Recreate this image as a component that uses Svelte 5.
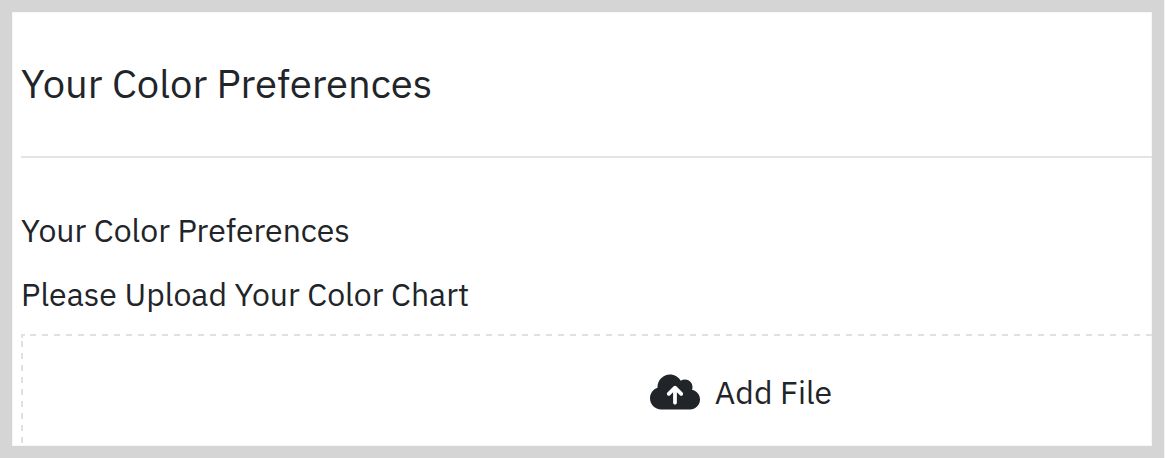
<script>
  let heading = "Your Color Preferences";
  let files = $state([]);

  function handleFiles(event) {
    files = Array.from(event.target.files);
  }
</script>

<main class="page">
  <div class="frame">
    <div class="content">
      <h1>{heading}</h1>
      <hr />
      <h2>{heading}</h2>
      <p>Please Upload Your Color Chart</p>
      <label class="dropzone">
        <input type="file" multiple onchange={handleFiles} />
        <svg viewBox="0 0 640 512" aria-hidden="true">
          <path d="M144 480C64.500 480 0 415.500 0 336c0-62.800 40.200-116.200 96.200-135.900-.1-2.700-.2-5.400-.2-8.100 0-88.400 71.600-160 160-160 59.300 0 111 32.200 138.700 80.200C409.900 102 428.300 96 448 96c53 0 96 43 96 96 0 12.200-2.300 23.800-6.400 34.600C596 238.400 640 290.100 640 352c0 70.700-57.300 128-128 128H144zm79-217c-9.400 9.400-9.400 24.600 0 33.900s24.600 9.400 33.900 0l39-39V392c0 13.300 10.700 24 24 24s24-10.700 24-24V257.900l39 39c9.400 9.400 24.600 9.400 33.900 0s9.400-24.600 0-33.900l-80-80c-9.400-9.400-24.600-9.400-33.900 0l-80 80z" />
        </svg>
        <span>Add File</span>
      </label>
    </div>
  </div>
</main>

<style>
  :global(body) {
    margin: 0;
  }
  .page {
    box-sizing: border-box;
    height: 100vh;
    padding: 12px;
    border-right: 1px solid #f3f3f3;
    background: #d5d5d5;
  }
  .frame {
    height: 100%;
    overflow: hidden;
    background: #fff;
    box-shadow: inset 0 0 0 1px #f6f6f6;
    color: #212529;
    font-family: "IBM Plex Sans", Roboto, sans-serif;
  }
  /* the form is wider than the frame and runs off its right edge */
  .content {
    margin: 0 -309px 0 9px;
    padding-top: 43px;
  }
  h1 {
    margin: 0 0 45px;
    font-size: 40px;
    font-weight: 400;
    line-height: 56px;
  }
  hr {
    margin: 0 0 48px;
    border: 0;
    border-top: 2px solid #e4e4e4;
  }
  h2,
  p {
    margin: 0 0 16px;
    font-size: 32px;
    font-weight: 400;
    line-height: 48px;
  }
  .dropzone {
    display: flex;
    align-items: center;
    justify-content: center;
    gap: 15px;
    height: 116px;
    /* dashed outline, 6px dash and 6px gap, with a closed corner */
    background:
      linear-gradient(#dee2e6, #dee2e6) 0 0 / 4px 2px no-repeat,
      linear-gradient(#dee2e6, #dee2e6) 0 0 / 2px 4px no-repeat,
      linear-gradient(90deg, #dee2e6 50%, transparent 50%) -3px 0 / 12px 2px repeat-x,
      linear-gradient(#dee2e6 50%, transparent 50%) 0 -5px / 2px 12px repeat-y;
    font-size: 32px;
    cursor: pointer;
  }
  .dropzone input {
    position: absolute;
    width: 1px;
    opacity: 0;
  }
  svg {
    width: 50px;
    height: 40px;
    fill: #212529;
  }
</style>
